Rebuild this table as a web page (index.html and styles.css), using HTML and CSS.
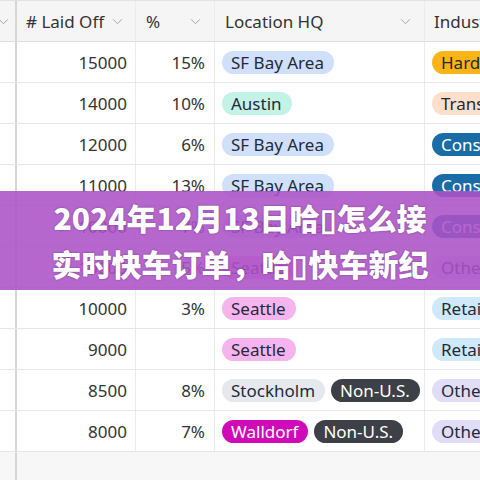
FILE: index.html
```html
<!DOCTYPE html>
<html>
<head>
<meta charset="utf-8">
<link rel="stylesheet" href="styles.css">
</head>
<body>
<div class="page">
  <div class="grid">
    <div class="row head">
      <div class="cell c0"><svg class="chev" viewBox="0 0 12 8"><polyline points="1,1.5 6,6.5 11,1.5"/></svg></div>
      <div class="cell c1"><span># Laid Off</span><svg class="chev" viewBox="0 0 12 8"><polyline points="1,1.5 6,6.5 11,1.5"/></svg></div>
      <div class="cell c2"><span>%</span><svg class="chev" viewBox="0 0 12 8"><polyline points="1,1.5 6,6.5 11,1.5"/></svg></div>
      <div class="cell c3"><span>Location HQ</span><svg class="chev" viewBox="0 0 12 8"><polyline points="1,1.5 6,6.5 11,1.5"/></svg></div>
      <div class="cell c4"><span>Industry</span></div>
    </div>
    <div class="row"><div class="cell c0"></div><div class="cell c1 num">15000</div><div class="cell c2 num">15%</div><div class="cell c3"><span class="pill sf">SF Bay Area</span></div><div class="cell c4"><span class="pill hw">Hardware</span></div></div>
    <div class="row"><div class="cell c0"></div><div class="cell c1 num">14000</div><div class="cell c2 num">10%</div><div class="cell c3"><span class="pill au">Austin</span></div><div class="cell c4"><span class="pill tr">Transportation</span></div></div>
    <div class="row"><div class="cell c0"></div><div class="cell c1 num">12000</div><div class="cell c2 num">6%</div><div class="cell c3"><span class="pill sf">SF Bay Area</span></div><div class="cell c4"><span class="pill co">Consumer</span></div></div>
    <div class="row"><div class="cell c0"></div><div class="cell c1 num">11000</div><div class="cell c2 num">13%</div><div class="cell c3"><span class="pill sf">SF Bay Area</span></div><div class="cell c4"><span class="pill co">Consumer</span></div></div>
    <div class="row"><div class="cell c0"></div><div class="cell c1 num">10000</div><div class="cell c2 num">7%</div><div class="cell c3"><span class="pill sf">SF Bay Area</span></div><div class="cell c4"><span class="pill co">Consumer</span></div></div>
    <div class="row"><div class="cell c0"></div><div class="cell c1 num">10000</div><div class="cell c2 num">5%</div><div class="cell c3"><span class="pill se">Seattle</span></div><div class="cell c4"><span class="pill ot">Other</span></div></div>
    <div class="row"><div class="cell c0"></div><div class="cell c1 num">10000</div><div class="cell c2 num">3%</div><div class="cell c3"><span class="pill se">Seattle</span></div><div class="cell c4"><span class="pill re">Retail</span></div></div>
    <div class="row"><div class="cell c0"></div><div class="cell c1 num">9000</div><div class="cell c2 num"></div><div class="cell c3"><span class="pill se">Seattle</span></div><div class="cell c4"><span class="pill re">Retail</span></div></div>
    <div class="row"><div class="cell c0"></div><div class="cell c1 num">8500</div><div class="cell c2 num">8%</div><div class="cell c3"><span class="pill st">Stockholm</span><span class="pill nu">Non-U.S.</span></div><div class="cell c4"><span class="pill ot">Other</span></div></div>
    <div class="row"><div class="cell c0"></div><div class="cell c1 num">8000</div><div class="cell c2 num">7%</div><div class="cell c3"><span class="pill wa">Walldorf</span><span class="pill nu">Non-U.S.</span></div><div class="cell c4"><span class="pill ot">Other</span></div></div>
    <div class="row foot"><div class="cell c0"></div><div class="cell fill"></div></div>
  </div>
  <div class="banner">
    <p>2024年12月13日哈▯怎么接</p>
    <p>实时快车订单，哈▯快车新纪</p>
  </div>
</div>
</body>
</html>
```
FILE: styles.css
```css
html, body {
  margin: 0;
  padding: 0;
  background: #ffffff;
}
body {
  width: 480px;
  height: 480px;
  overflow: hidden;
  font-family: "Noto Sans", "Open Sans", sans-serif;
  color: #333333;
}
.page {
  position: relative;
  width: 480px;
  height: 480px;
  overflow: hidden;
}
.grid {
  display: flex;
  flex-direction: column;
  border-top: 1px solid #e2e2e2;
}
.row {
  display: flex;
  height: 40px;
  border-bottom: 1px solid #e6e6e6;
  background: #ffffff;
}
.row.head {
  height: 40px;
  background: #f5f5f5;
  border-bottom: 1px solid #dedede;
}
.row.foot {
  height: 40px;
  border-bottom: none;
  background: #f7f7f7;
}
.cell {
  display: flex;
  align-items: center;
  box-sizing: border-box;
  border-right: 1px solid #ebebeb;
  font-size: 17px;
  white-space: nowrap;
  overflow: hidden;
  flex-shrink: 0;
}
.c0 {
  width: 17px;
  border-right: 2px solid #d6d6d6;
  justify-content: flex-end;
  padding-right: 5px;
}
.c1 { width: 119px; padding: 0 8px 0 9px; }
.c2 { width: 79px; padding: 0 9px 0 10px; }
.c3 { width: 210px; padding: 0 8px 0 7px; gap: 6px; }
.c4 { flex: 1; padding: 0 0 0 7px; border-right: none; }
.fill { flex: 1; border-right: none; }
.head .cell {
  justify-content: space-between;
  color: #333333;
}
.head .c1 { padding-left: 9px; padding-right: 12px; }
.head .c2 { padding-right: 13px; }
.head .c3 { padding-left: 10px; padding-right: 13px; }
.head .c4 { padding-left: 9px; }
.head .c0 { justify-content: flex-end; padding-right: 6px; }
.chev {
  width: 11px;
  height: 7px;
  fill: none;
  stroke: #a0a0a0;
  stroke-width: 1.1;
  flex-shrink: 0;
}
.num {
  justify-content: flex-end;
  color: #333333;
}
.pill {
  display: inline-flex;
  align-items: center;
  height: 23px;
  padding: 0 10px 0 9px;
  border-radius: 12px;
  font-size: 17px;
  color: #1f2a38;
  flex-shrink: 0;
}
.sf { background: #d0e0fb; }
.au { background: #c3f3e7; }
.se { background: #f6b4ee; }
.st { background: #e5e8ed; }
.nu { background: #3d4046; color: #ffffff; }
.wa { background: #d10ab9; color: #ffffff; }
.hw { background: #fbb417; }
.tr { background: #fddfcb; }
.co { background: #1a6ca6; color: #ffffff; }
.ot { background: #e1dcf8; }
.re { background: #cfe8fa; }
.banner {
  position: absolute;
  left: 0;
  top: 191px;
  width: 480px;
  height: 99px;
  box-sizing: border-box;
  padding-top: 3px;
  background: rgba(172, 82, 198, 0.88);
  display: flex;
  flex-direction: column;
  align-items: center;
}
.banner p {
  margin: 0;
  font-family: "Noto Sans CJK SC", "Noto Sans", sans-serif;
  font-weight: 900;
  font-size: 30px;
  line-height: 46px;
  color: #ffffff;
  text-shadow: 0 0 2px rgba(60, 20, 80, 0.5);
  white-space: nowrap;
}
```
